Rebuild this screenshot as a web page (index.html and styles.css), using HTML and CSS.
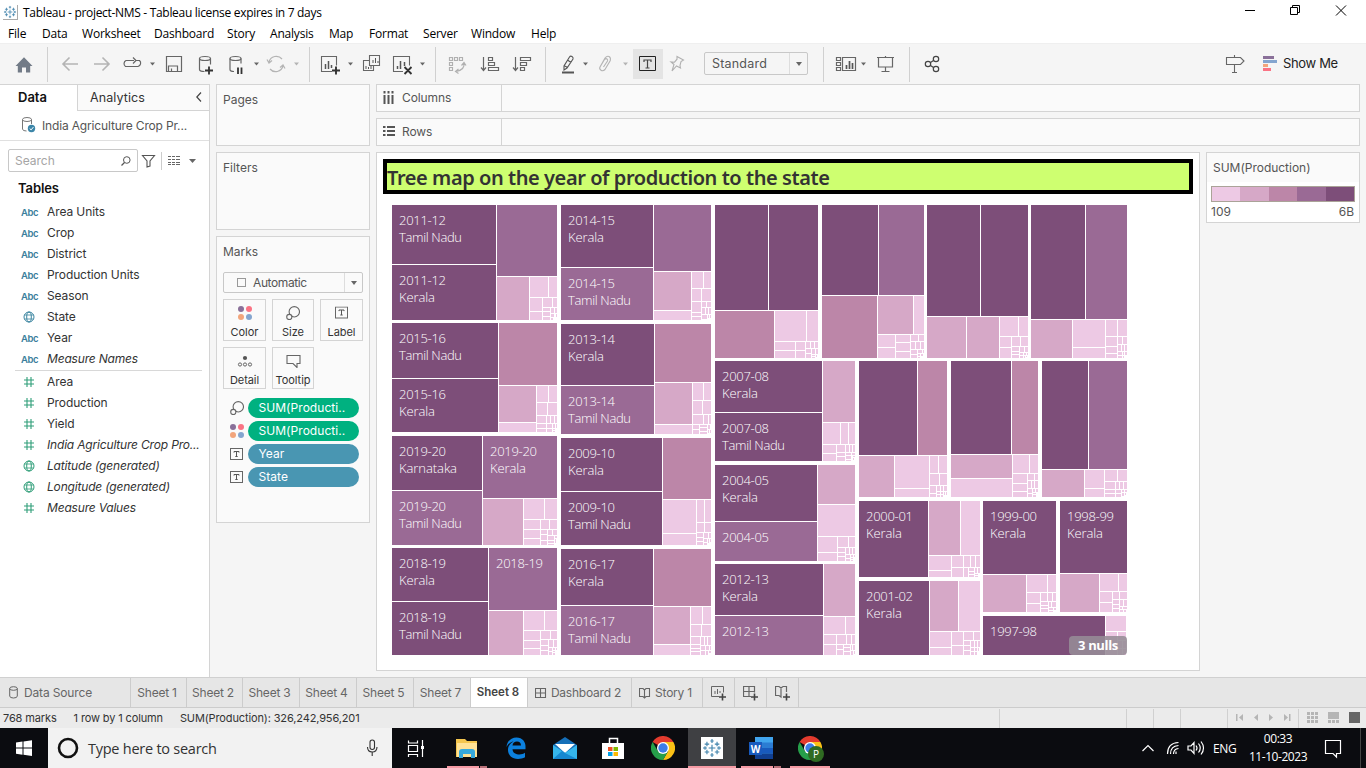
FILE: index.html
```html
<!DOCTYPE html>
<html lang="en">
<head>
<meta charset="utf-8">
<title>Tableau - project-NMS</title>
<link rel="stylesheet" href="styles.css">
</head>
<body>
<svg width="0" height="0" class="defs">
  <defs>
    <symbol id="hash" viewBox="0 0 12 12"><path d="M4 1v10M8 1v10M1 4h10M1 8h10" fill="none" stroke="#2f9e78" stroke-width="1.1"/></symbol>
    <symbol id="globe" viewBox="0 0 12 12"><g fill="none" stroke="currentColor"><circle cx="6" cy="6" r="5"/><ellipse cx="6" cy="6" rx="2.3" ry="5"/><path d="M1.5 4h9M1.5 8h9" stroke-width=".8"/></g></symbol>
    <symbol id="tbox" viewBox="0 0 14 13"><rect x=".5" y=".5" width="12" height="11" fill="none" stroke="#666"/><path d="M4 4.6V3.5h5v1.1M6.5 3.5v5M5.3 8.5h2.4" fill="none" stroke="#555"/></symbol>
    <symbol id="bubbles" viewBox="0 0 14 14"><circle cx="8.3" cy="5.8" r="5.2" fill="none" stroke="#666" stroke-width="1.1"/><circle cx="3.3" cy="11" r="2.6" fill="#fafafa" stroke="#666" stroke-width="1.1"/></symbol>
    <symbol id="dots" viewBox="0 0 14 14"><circle cx="3" cy="3" r="3" fill="#8a7099"/><circle cx="11" cy="3" r="3" fill="#fa7384"/><circle cx="3" cy="11" r="3" fill="#f2a57c"/><circle cx="11" cy="11" r="3" fill="#84a5cf"/></symbol>
    <symbol id="snow" viewBox="0 0 16 16"><path d="M8 5v6M5 8h6M8 0v3.5M6.5 1.8h3M8 12.5V16M6.5 14.2h3M0 8h3.5M1.8 6.5v3M12.5 8H16M14.2 6.5v3M3.5 2.5v4M1.5 4.5h4M12.5 2.5v4M10.5 4.5h4M3.5 9.5v4M1.5 11.5h4M12.5 9.5v4M10.5 11.5h4" fill="none" stroke="#3f82ab" stroke-width="1"/></symbol>
    <symbol id="chrome" viewBox="0 0 24 24"><path d="M12 12 1.6 6A12 12 0 0 1 22.4 6z" fill="#e33b2e"/><path d="M12 6h10.4A12 12 0 0 1 12 24l5.2-9z" fill="#fbc116"/><path d="M1.6 6 6.8 15 12 18h0.1L17.2 15 12 24A12 12 0 0 1 1.6 6z" fill="#269f4a"/><circle cx="12" cy="12" r="6" fill="#fff"/><circle cx="12" cy="12" r="4.7" fill="#3d7de8"/></symbol>
  </defs>
</svg>
<div class="window">
  <header class="titlebar">
    <svg class="appicon" width="15" height="15" viewBox="-1 -1 18 18"><use href="#snow" width="16" height="16"/></svg>
    <span class="title">Tableau - project-NMS - Tableau license expires in 7 days</span>
    <svg class="winbtns" width="126" height="24" viewBox="1240 0 126 24"><g fill="none" stroke="#000"><path d="M1245 10.500h10M1290.500 7.500h7v7h-7zM1292.500 7.500v-2h7v7h-2M1336 5.500l10 10M1346 5.500l-10 10"/></g></svg>
  </header>
  <nav class="menubar">
    <span class="m1">File</span><span class="m2">Data</span><span class="m3">Worksheet</span><span class="m4">Dashboard</span><span class="m5">Story</span><span class="m6">Analysis</span><span class="m7">Map</span><span class="m8">Format</span><span class="m9">Server</span><span class="m10">Window</span><span>Help</span>
  </nav>
  <div class="toolbar">
    <svg width="47" height="41" viewBox="0 43 47 41"><path d="M15.500 66 24 57.200l8.500 8.800h-2.300v6.500h-4.200v-5h-4v5h-4.200V66z" fill="#727b87"/></svg>
    <i class="sep"></i>
    <svg width="261" height="41" viewBox="48 43 261 41">
      <g fill="none" stroke="#b4b4b4" stroke-width="1.600"><path d="M78 64H63M69.500 57.500 63 64l6.500 6.500M94 64h15M102.500 57.500 109 64l-6.500 6.500"/><path d="M269 62a7.500 7.500 0 0 1 13-3M283 66a7.500 7.500 0 0 1-13 3M267 59.500l2 3.500 3-2.500M285 68.500l-2-3.500-3 2.500" stroke-width="1.200"/></g>
      <g fill="none" stroke="#666" stroke-width="1.200"><path d="M134 60.500h-8a3.500 3.500 0 0 0-.5 6h12.500a3.500 3.500 0 0 0 1.500-6h-4M133 57.500l3 3-3 3"/><path d="M166.500 56.500h15v15h-15zM168.500 71v-5h9v5M171.500 71v-2.500"/><ellipse cx="205" cy="58.500" rx="5.500" ry="2"/><path d="M199.500 58.500v11q0 2 5 2M210.500 58.500v6"/><ellipse cx="235.500" cy="58.500" rx="5.500" ry="2"/><path d="M230 58.500v11q0 2 4 2M241 58.500v5"/></g>
      <path d="M205 70.500h8M209 66.500v8M238 67.500v6.500M241.500 67.500v6.500" stroke="#333" stroke-width="1.800" fill="none"/>
      <path d="M150 62.500h5l-2.500 3zM254 62.500h5l-2.500 3z" fill="#666"/><path d="M294 62.500h5l-2.500 3z" fill="#b4b4b4"/>
    </svg>
    <i class="sep"></i>
    <svg width="125" height="41" viewBox="310 43 125 41">
      <g fill="none" stroke="#666" stroke-width="1.100"><path d="M332 71.500h-10.500v-15h15v9M369.500 60.500v-5h10v10h-10zM369.500 60.500h-6v10h10v-5M403 71.500h-9.500v-15h16v9"/></g>
      <path d="M325.500 69v-5M328.500 69v-8M331.500 68v-3M397.500 69v-3M400.500 69v-8M404.500 66v-4" stroke="#555" stroke-width="1.500"/><path d="M373 63v-3M375.500 63v-5M378 63v-2M366 69v-3M368.500 69v-2M371 69v-3" stroke="#555"/>
      <path d="M332 70.500h8M336 66.500v8M404.500 67l7 7M411.500 67l-7 7" stroke="#333" stroke-width="1.900"/>
      <path d="M348 62.500h5l-2.500 3zM420 62.500h5l-2.500 3z" fill="#666"/>
    </svg>
    <i class="sep"></i>
    <svg width="109" height="41" viewBox="436 43 109 41">
      <g fill="none" stroke="#b0b0b0" stroke-width="1.200"><path d="M449.500 57.500h3v3h-3zM454.500 57.500h3v3h-3zM459.500 57.500h3v3h-3zM449.500 62.500h3v3h-3zM449.500 67.500h3v3h-3zM464 63q1 7-8 8.500M461.500 65.500l2.500-3 2 3M458.500 69l-3 2.500 3 2"/></g>
      <g fill="none" stroke="#666" stroke-width="1.200"><path d="M483.500 57v13M481 67.500l2.500 3 2.500-3M488.500 57.500h4v3h-4zM488.500 62.500h6v3h-6zM488.500 67.500h10v3h-10zM515.500 57v13M513 67.500l2.500 3 2.500-3M520.500 57.500h10v3h-10zM520.500 62.500h6v3h-6zM520.500 67.500h4v3h-4z"/></g>
    </svg>
    <i class="sep"></i>
    <svg width="87" height="41" viewBox="546 43 87 41"><path d="M562 72.500h12" stroke="#555" stroke-width="2"/><path d="M564 70v-4l5.500-9q1-1.500 2.500-.5t1 2.500L567 68zM564 65.500l3.500 2M567.500 60l3.500 2.500" fill="none" stroke="#555" stroke-width="1.100"/><path d="M583 62.500h5l-2.500 3z" fill="#666"/><path d="M600 67l5-9q2-2.500 4-1.500t1.300 4L605 69.500q-2 2-4 .7t-1-3.200l4.500-7.500q1.500-1.500 2.500-.5t.5 2L603.500 67" fill="none" stroke="#b4b4b4" stroke-width="1.100"/><path d="M623 62.500h5l-2.500 3z" fill="#b4b4b4"/></svg>
    <span class="tbtn"><svg width="30" height="30" viewBox="633 49 30 30"><path d="M639.500 56.500h16v14h-16z" fill="none" stroke="#222"/><path d="M644 62v-2h7v2M647.500 60v8M645.500 68h4" fill="none" stroke="#444" stroke-width="1.200"/></svg></span>
    <svg width="41" height="41" viewBox="663 43 41 41"><path d="M677 56.500l6.500 3.500-2.500 1.500-1 4 .5 2.500-4-2-4.500 5 2-6.500-3-2.500 3.500.2 2.500-3z" fill="none" stroke="#b0b0b0" stroke-width="1.100"/></svg>
    <div class="combo big"><span>Standard</span><i></i></div>
    <svg width="15" height="41"></svg>
    <i class="sep"></i>
    <svg width="85" height="41" viewBox="824 43 85 41"><g fill="none" stroke="#666" stroke-width="1.200"><path d="M836.500 57.500h4v3h-4zM836.500 62.500h4v3h-4zM836.500 67.500h4v3h-4zM842.500 57.500h13v13h-13zM877 57.500h17M878.500 57.500v9.500h14v-9.500M885.500 56v2M885.500 67v4.500M881.500 71.500h8"/></g><path d="M846.500 69v-4M849.500 69v-8M852.500 69v-6" stroke="#555" stroke-width="1.700"/><path d="M861 62.500h5l-2.500 3z" fill="#666"/></svg>
    <i class="sep"></i>
    <svg width="40" height="41" viewBox="910 43 40 41"><g fill="none" stroke="#444" stroke-width="1.200"><circle cx="928" cy="64" r="2.700"/><circle cx="936" cy="59" r="2.700"/><circle cx="936" cy="69" r="2.700"/><path d="M930.500 62.500l3-2M930.500 65.500l3 2"/></g></svg>
    <svg class="push" width="58" height="41" viewBox="1220 43 58 41"><path d="M1226.500 57.500h14l3.500 3.500-3.500 3.500h-14zM1234.500 55v2M1234.500 65v7M1232 72.500h5" fill="none" stroke="#666" stroke-width="1.100"/><path d="M1263 56h11v3h-11z" fill="#8a7099"/><path d="M1263 60h14v3h-14z" fill="#84a5cf"/><path d="M1263 64h5v3h-5z" fill="#f2a57c"/><path d="M1263 68h8v3h-8z" fill="#fa7384"/></svg>
    <span class="showme">Show Me</span>
  </div>
  <main class="main">
    <aside class="datapane">
      <div class="ptabs"><b>Data</b><div><span>Analytics</span><svg width="6" height="10" viewBox="0 0 6 10"><path d="M5 .5.800 5 5 9.500" fill="none" stroke="#444" stroke-width="1.200"/></svg></div></div>
      <div class="source"><svg width="14" height="16" viewBox="0 0 14 16"><ellipse cx="5" cy="2.500" rx="4.500" ry="2" fill="none" stroke="#777"/><path d="M.5 2.500V12q0 2 4 2M9.500 2.500V7" fill="none" stroke="#777"/><circle cx="9.500" cy="11.500" r="3.700" fill="#3b85a8"/><path d="M7.700 11.500l1.400 1.400 2.300-2.800" fill="none" stroke="#fff"/></svg><span>India Agriculture Crop Pr...</span></div>
      <div class="searchrow">
        <div class="search"><span>Search</span><svg width="10" height="10" viewBox="0 0 10 10"><circle cx="5.800" cy="4" r="3.300" fill="none" stroke="#555"/><path d="M3.500 6.500.500 9.500" stroke="#555" stroke-width="1.200"/></svg></div>
        <svg width="61" height="22" viewBox="138 149 61 22"><path d="M142.500 154.500h12l-4.500 5.500v5l-3 1v-6z" fill="none" stroke="#555" stroke-width="1.100"/><path d="M161.500 151v18" stroke="#ccc"/><path d="M168 155.500h3M172 155.500h3M176 155.500h4M168 158.500h3M172 158.500h3M176 158.500h4M168 161.500h3M172 161.500h3M176 161.500h4M168 163.500h3M172 163.500h3M176 163.500h4" stroke="#666" stroke-width="1.200"/><path d="M189 158h7l-3.500 4z" fill="#666"/></svg>
      </div>
      <h2>Tables</h2>
      <ul class="fields">
        <li><b>Abc</b>Area Units</li><li><b>Abc</b>Crop</li><li><b>Abc</b>District</li><li><b>Abc</b>Production Units</li><li><b>Abc</b>Season</li>
        <li><svg class="blue" width="12" height="12"><use href="#globe"/></svg>State</li><li><b>Abc</b>Year</li><li class="it"><b>Abc</b>Measure Names</li>
      </ul>
      <hr>
      <ul class="fields">
        <li><svg width="12" height="12"><use href="#hash"/></svg>Area</li><li><svg width="12" height="12"><use href="#hash"/></svg>Production</li><li><svg width="12" height="12"><use href="#hash"/></svg>Yield</li>
        <li class="it"><svg width="12" height="12"><use href="#hash"/></svg><span class="long">India Agriculture Crop Pro...</span></li>
        <li class="it"><svg class="green" width="12" height="12"><use href="#globe"/></svg>Latitude (generated)</li><li class="it"><svg class="green" width="12" height="12"><use href="#globe"/></svg>Longitude (generated)</li>
        <li class="it"><svg width="12" height="12"><use href="#hash"/></svg>Measure Values</li>
      </ul>
    </aside>
    <section class="cards">
      <div class="card pages">Pages</div>
      <div class="card filters">Filters</div>
      <div class="card marks">Marks
        <div class="combo small"><svg width="10" height="10"><rect x=".5" y=".5" width="8" height="8" fill="none" stroke="#999"/></svg><span>Automatic</span><i></i></div>
        <div class="mgrid">
          <div><svg width="14" height="14"><use href="#dots"/></svg>Color</div>
          <div><svg width="14" height="14"><use href="#bubbles"/></svg>Size</div>
          <div><svg width="14" height="14" viewBox="0 0 14 13"><use href="#tbox" width="14" height="13"/></svg>Label</div>
          <div><svg width="16" height="14" viewBox="0 0 16 14"><circle cx="8" cy="4" r="2.100" fill="#555"/><g fill="none" stroke="#666"><circle cx="3" cy="10.500" r="1.600"/><circle cx="8" cy="10.500" r="1.600"/><circle cx="13" cy="10.500" r="1.600"/></g></svg>Detail</div>
          <div><svg width="15" height="14" viewBox="0 0 15 14"><path d="M1 1.500h13v8h-3v4l-4-4H1z" fill="none" stroke="#666" stroke-width="1.100"/></svg>Tooltip</div>
        </div>
        <div class="pills">
          <div><svg width="14" height="14"><use href="#bubbles"/></svg><span class="g">SUM(Producti..</span></div>
          <div><svg width="14" height="14"><use href="#dots"/></svg><span class="g">SUM(Producti..</span></div>
          <div><svg width="14" height="13"><use href="#tbox"/></svg><span>Year</span></div>
          <div><svg width="14" height="13"><use href="#tbox"/></svg><span>State</span></div>
        </div>
      </div>
    </section>
    <section class="work">
      <div class="shelf"><div><svg width="12" height="13" viewBox="0 0 12 13"><path d="M1.500 0v2.500M5.500 0v2.500M9.500 0v2.500M1.500 4v9M5.500 4v9M9.500 4v9" stroke="#555" stroke-width="2"/></svg>Columns</div></div>
      <div class="shelf"><div><svg width="12" height="11" viewBox="0 0 12 11"><path d="M0 1h2.500M0 5h2.500M0 9h2.500M4 1h8M4 5h8M4 9h8" stroke="#555" stroke-width="1.800"/></svg>Rows</div></div>
      <div class="bottom">
        <div class="view">
          <h1>Tree map on the year of production to the state</h1>
          <div class="plot"><svg id="treemap" width="737" height="452" viewBox="391 204 737 452" shape-rendering="crispEdges"></svg><span class="nulls">3 nulls</span></div>
        </div>
        <div class="legend"><p>SUM(Production)</p><div class="ramp"><i></i><i></i><i></i><i></i><i></i></div><div class="range"><span>109</span><span>6B</span></div></div>
      </div>
    </section>
  </main>
  <nav class="sheets">
    <span class="ds"><svg width="9" height="13" viewBox="0 0 9 13"><ellipse cx="4.500" cy="2.500" rx="3.800" ry="1.800" fill="none" stroke="#666"/><path d="M.700 2.500v7.500q0 2 3.800 2t3.800-2V2.500" fill="none" stroke="#666"/></svg>Data Source</span><span>Sheet 1</span><span>Sheet 2</span><span class="w57">Sheet 3</span><span class="w57">Sheet 4</span><span class="w57">Sheet 5</span><span class="w57">Sheet 7</span><span class="on">Sheet 8</span>
    <span class="db"><svg width="12" height="12"><path d="M.5 1.500h10v9H.500zM.5 6h10M5.500 1.500v9" fill="none" stroke="#666" stroke-width="1.100"/></svg>Dashboard 2</span>
    <span class="st"><svg width="12" height="12"><path d="M5.500 3 4 1.500H.500v8H4L5.500 11 7 9.500h3.500v-8H7zM5.500 3v8" fill="none" stroke="#666" stroke-width="1.100"/></svg>Story 1</span>
    <span class="add"><svg width="16" height="16"><path d="M8 11.500H.500v-10h12v6M4 9V6M6.500 9V4M9 8V6" fill="none" stroke="#666"/><path d="M8 12h7M11.500 8.500v7" stroke="#444" stroke-width="1.600"/></svg></span>
    <span class="add"><svg width="16" height="16"><path d="M8 11.500H.500v-10h11v6M.5 6.500h11M6 1.500v10" fill="none" stroke="#666" stroke-width="1.200"/><path d="M8 12h7M11.500 8.500v7" stroke="#444" stroke-width="1.600"/></svg></span>
    <span class="add"><svg width="16" height="16"><path d="M11.500 7V1.500H8L6 3 4 1.500H.500v9H4L6 12V3" fill="none" stroke="#666" stroke-width="1.200"/><path d="M8 12h7M11.500 8.500v7" stroke="#444" stroke-width="1.600"/></svg></span>
  </nav>
  <footer class="status"><span>768 marks</span><span>1 row by 1 column</span><span>SUM(Production): 326,242,956,201</span>
    <svg width="370" height="19" viewBox="996 709 370 19"><path d="M999.500 709v19M1126.500 709v19M1153.500 709v19M1180.500 709v19M1227.500 709v19M1298.500 709v19" stroke="#d0d0d0"/><g fill="#b5b5b5"><path d="M1236 714h1.500v7h-1.500zM1243 714v7l-4-3.500zM1258 714v7l-4-3.500zM1269 714v7l4-3.500zM1284 714v7l4-3.500zM1289 714h1.500v7h-1.500zM1307 712h3v3h-3zM1311 712h3v3h-3zM1315 712h3v3h-3zM1307 716h3v3h-3zM1311 716h3v3h-3zM1315 716h3v3h-3zM1307 720h3v3h-3zM1311 720h3v3h-3zM1315 720h3v3h-3zM1328 712h11v7h-11zM1328 720h3v3h-3zM1332 720h3v3h-3zM1336 720h3v3h-3z"/></g><path d="M1349 712h11v11h-11z" fill="#666"/></svg>
  </footer>
  <div class="taskbar">
    <svg width="48" height="40" viewBox="0 728 48 40"><path d="M16 742.500l6.500-1v6H16zM23.500 741.400l8.500-1.200v7.300h-8.500zM16 748.500h6.500v6.200l-6.500-1zM23.500 748.500H32v7.500l-8.500-1.200z" fill="#fff"/></svg>
    <div class="tsearch"><svg width="22" height="22"><circle cx="11" cy="11" r="9" fill="none" stroke="#111" stroke-width="2.600"/></svg><span>Type here to search</span><svg width="12" height="18"><rect x="4" y="1" width="4.500" height="9.500" rx="2.200" fill="none" stroke="#333" stroke-width="1.100"/><path d="M1.500 8q0 5 4.700 5T11 8M6.200 13v4" fill="none" stroke="#333" stroke-width="1.100"/></svg></div>
    <svg width="448" height="40" viewBox="392 728 448 40">
      <path d="M688 728h48v40h-48z" fill="#3f4043"/>
      <path d="M408.500 740.500v2.500h9v-2.500M408.500 745.500h9v6h-9zM408.500 757v-2.500h9v2.500M422.500 740v17" fill="none" stroke="#fff" stroke-width="1.200"/><path d="M421 746h3v3h-3z" fill="#fff"/>
      <path d="M456 739h9l2 2h10v16h-21z" fill="#f4c64f"/><path d="M457 743h20v14h-20z" fill="#ffe296"/><path d="M459 758v-6q0-3 3-3h10q3 0 3 3v6h-4v-4h-8v4z" fill="#36a9dc"/>
      <path d="M506.500 747c.5-6 5-9.500 10-9.500 6 0 9 4.500 9 9v2.800h-13c.3 4 3.500 5.200 7 5.200 2 0 4-.7 5.500-1.700v4.400c-2 1.200-4.500 1.700-7 1.700-6 0-10-3.500-10-8.800 0-4 2-7 5.500-8.700-2.500.3-5.200 2-7 5.600zm6-1.500h8.500c0-2.800-1.500-4-4-4s-4.200 1.600-4.500 4z" fill="#0c80dd"/>
      <path d="M553 745l12-8 12 8v14h-24z" fill="#156fb8"/><path d="M555 744h20l-10 9z" fill="#fff"/><path d="M553 745l12 8 12-8v14h-24z" fill="#35b6ec"/><path d="M553 759l9-8 3 2 12 6z" fill="#1688d1"/>
      <path d="M602 743h22v16h-22z" fill="#fff"/><path d="M609.500 743v-4.500h8v4.500" fill="none" stroke="#fff" stroke-width="1.500"/><path d="M608 747h4.500v4H608z" fill="#ee5125"/><path d="M613.500 747h4.500v4h-4.500z" fill="#7eb901"/><path d="M608 752h4.500v4H608z" fill="#02a2e9"/><path d="M613.500 752h4.500v4h-4.500z" fill="#fdb902"/>
      <use href="#chrome" x="651" y="736" width="24" height="24"/>
      <path d="M701 737h22v22h-22z" fill="#fff"/><use href="#snow" x="703" y="739" width="18" height="18"/>
      <path d="M755 737h18v22h-18z" fill="#41a5ee"/><path d="M755 742.500h18v5.500h-18z" fill="#2b7cd3"/><path d="M755 748h18v5.500h-18z" fill="#185abd"/><path d="M755 753.500h18v5.500h-18z" fill="#103f91"/><path d="M749 742h13v13h-13z" fill="#185abd"/><text x="755.500" y="752.500" class="word">W</text>
      <use href="#chrome" x="798" y="736" width="24" height="24"/><circle cx="816" cy="754" r="8" fill="#2f6b22"/><text x="816" y="757.500" class="pp">P</text>
      <path d="M447 766h32v2h-32zM688 766h48v2h-48zM741 766h32v2h-32zM790 766h40v2h-40z" fill="#f59aa4"/><path d="M480 766h7v2h-7zM774 766h7v2h-7z" fill="#b97179"/>
    </svg>
    <svg class="push" width="70" height="40" viewBox="1136 728 70 40"><g fill="none" stroke="#fff" stroke-width="1.200"><path d="M1141.500 751l5.500-5.500 5.500 5.500"/><path d="M1175 754v-2.500M1172.500 754q0-5 5-5.500M1169.500 754q0-8 8-8.500M1166.500 754q0-11 11-11.500M1187 746h3l3-3.500v11l-3-3.500h-3zM1195 745.500q2 2.500 0 5M1197.500 743.500q3.500 4.500 0 9M1200 741.500q5 6.500 0 13"/></g></svg>
    <span class="eng">ENG</span>
    <div class="clock"><span>00:33</span><span>11-10-2023</span></div>
    <svg width="52" height="40" viewBox="1314 728 52 40"><path d="M1325.500 740.500h15v13h-4v3.500l-3.500-3.500h-7.500z" fill="none" stroke="#fff" stroke-width="1.200"/><path d="M1360.500 728v40" stroke="#444"/></svg>
  </div>
</div>
<script src="treemap.js"></script>
</body>
</html>
```

FILE: treemap.js
```js
// Cells: shade (1 light .. 5 dark), left, top, right, bottom.
const shades = ['', '#edc9e4', '#d6a8c7', '#bc86a8', '#9a6a95', '#7d4e79'];
const large = `
5 392 205 496 264|5 392 265 496 320|4 497 205 557 276|2 497 277 529 320
5 392 323 498 378|5 392 379 498 432|3 499 323 557 385|2 499 386 536 422
5 392 436 482 490|4 392 491 482 545|4 483 436 557 498|2 483 499 523 545
5 392 548 488 601|5 392 602 488 655|4 489 548 557 610|2 489 611 523 655
5 561 205 653 267|4 561 268 653 320|4 654 205 711 271|2 654 272 691 310
5 561 324 654 385|4 561 386 654 434|3 655 324 711 382|2 655 383 692 424
5 561 438 662 491|5 561 492 662 545|3 663 438 711 499
5 561 549 653 605|4 561 606 653 655|3 654 549 711 606|2 654 607 690 644
5 715 205 768 310|5 769 205 818 310|3 715 311 774 358
5 822 205 878 295|4 879 205 924 295|3 822 296 877 358|2 878 296 913 334
5 927 205 980 316|5 981 205 1028 316|2 927 317 966 358|2 967 317 999 358
5 1031 205 1085 319|4 1086 205 1127 319|2 1031 320 1072 358
5 715 361 822 412|5 715 413 822 461|2 823 361 855 422
5 715 465 817 521|4 715 522 817 561|2 818 465 855 504
5 715 564 823 615|4 715 616 823 655|2 824 564 855 616
5 859 361 917 455|3 918 361 947 455|2 859 456 894 497
5 951 361 1011 454|3 1012 361 1038 454|2 951 455 1012 478
5 1042 361 1088 469|4 1089 361 1127 469|2 1042 470 1084 497
5 859 501 928 577|2 929 501 960 555|5 859 581 929 655|2 930 581 958 631
5 983 501 1056 574|2 983 575 1026 612|5 1060 501 1127 573|2 1060 574 1099 612
5 983 616 1105 655`;
const small = `
530 277 548 297|549 277 557 297|530 298 542 311|530 312 542 320|543 298 552 307|553 298 557 307|543 308 550 311|543 312 550 316|543 317 550 320|551 308 554 313|555 308 557 313|551 314 554 317|556 314 557 317|551 318 553 320
499 423 536 432|537 386 548 402|549 386 557 402|537 403 547 415|548 403 557 415|537 416 546 423|547 416 550 423|551 416 554 423|555 416 557 423|537 424 546 428|537 429 546 432|547 424 552 428|547 429 552 432|553 424 555 428|556 424 557 428|553 429 555 430|553 431 555 432
524 499 544 519|545 499 557 519|524 520 540 529|541 520 549 529|550 520 557 529|524 530 540 538|524 539 540 545|541 530 547 534|541 535 547 540|541 541 547 545|548 530 552 535|553 530 557 535|548 536 554 540|555 536 557 538|548 541 554 543|548 544 554 545|555 539 556 543
524 611 544 630|545 611 557 630|524 631 540 640|541 631 550 639|551 631 557 639|524 641 540 648|524 649 540 655|541 640 548 645|541 646 548 650|541 651 548 655|549 640 553 647|554 640 557 647|549 648 552 651|549 652 552 655|553 648 555 650|553 651 555 652|553 653 555 655|556 648 557 650
654 311 691 320|692 272 703 288|704 272 711 288|692 289 701 301|702 289 711 301|692 302 701 312|702 302 706 307|707 302 711 307|692 313 701 316|692 317 701 320|702 308 705 314|706 308 708 314|709 308 711 314|702 315 707 319|708 315 709 318|710 315 711 318
655 425 692 434|693 383 703 400|704 383 711 400|693 401 702 414|703 401 711 414|693 415 703 424|704 415 708 424|709 415 711 424|693 425 699 429|693 430 699 434|700 425 707 427|700 428 707 431|700 432 707 434|708 425 710 429|708 430 709 433|710 430 711 433
663 500 696 533|663 534 696 545|697 500 704 522|705 500 711 522|697 523 704 532|705 523 711 532|697 533 703 537|697 538 703 541|697 542 703 545|704 533 708 538|709 533 711 538|704 539 707 542|704 543 707 545|708 539 709 543|710 539 711 542
654 645 690 655|691 607 702 624|703 607 711 624|691 625 701 636|702 625 711 636|691 637 700 644|701 637 704 645|705 637 707 645|708 637 711 645|691 645 700 648|691 649 700 651|691 652 700 655|701 646 705 650|701 651 705 655|706 646 709 650|710 646 711 650|706 651 708 655|709 651 711 653
775 311 806 341|807 311 818 341|775 342 795 350|796 342 805 350|775 351 795 358|796 351 805 358|806 342 810 348|811 342 814 348|815 342 818 348|806 349 811 353|812 349 815 354|816 349 818 354|806 354 811 358|812 355 815 356|812 357 815 358|816 355 817 357
914 296 924 334|878 335 895 347|878 348 895 358|896 335 910 342|896 343 910 351|896 352 910 358|911 335 918 341|919 335 924 341|911 342 915 349|916 342 920 349|921 342 924 349|911 350 917 354|911 355 917 358|918 350 922 353|923 350 924 353|918 354 920 356|921 354 923 356|918 357 920 358
1000 317 1018 336|1019 317 1028 336|1000 337 1011 347|1000 348 1011 358|1012 337 1020 346|1021 337 1028 346|1012 347 1019 351|1012 352 1019 354|1012 355 1019 358|1020 347 1024 352|1025 347 1028 352|1020 353 1023 355|1024 353 1026 355|1027 353 1028 355|1020 356 1023 358|1024 356 1025 358|1026 356 1027 357
1073 320 1105 347|1073 348 1105 358|1106 320 1117 336|1118 320 1127 336|1106 337 1117 346|1106 347 1117 353|1106 354 1117 358|1118 337 1122 344|1123 337 1127 344|1118 345 1121 351|1122 345 1124 351|1125 345 1127 351|1118 352 1122 355|1123 352 1124 355|1125 352 1127 355|1118 356 1122 358|1123 356 1124 358
823 423 840 444|841 423 848 444|849 423 855 444|823 445 836 453|823 454 836 461|837 445 845 452|837 453 845 456|837 457 845 461|846 445 849 452|850 445 852 452|853 445 855 452|846 453 851 455|846 456 851 459|846 460 851 461|852 453 855 455|853 456 855 457|853 458 854 460
818 505 855 536|818 537 837 552|818 553 837 561|838 537 848 547|849 537 855 547|838 548 845 552|838 553 845 556|838 557 845 561|846 548 849 554|850 548 852 554|853 548 855 554|846 555 850 558|846 559 850 561|851 555 853 557|854 555 855 557|851 558 853 559|851 560 853 561
824 617 845 634|846 617 855 634|824 635 836 644|824 645 836 655|837 635 846 644|847 635 851 644|852 635 855 644|837 645 843 649|837 650 843 655|844 645 850 647|844 648 850 651|844 652 850 655|851 645 852 650|853 645 855 650|851 651 853 655|854 651 855 654
895 456 929 488|895 489 929 497|930 456 938 473|939 456 947 473|930 474 939 485|940 474 947 485|930 486 936 493|930 494 936 497|937 486 940 491|941 486 943 491|944 486 947 491|937 492 940 494|937 495 940 497|941 492 943 494|941 495 943 497|944 492 945 495|946 492 947 495
951 479 1012 497|1013 455 1029 473|1030 455 1038 473|1013 474 1027 483|1013 484 1027 491|1013 492 1027 497|1028 474 1034 480|1035 474 1038 480|1028 481 1031 488|1032 481 1034 488|1035 481 1038 488|1028 489 1032 493|1028 494 1032 497|1033 489 1035 492|1036 489 1038 492|1033 493 1036 494|1033 495 1036 497
1085 470 1104 488|1085 489 1104 497|1105 470 1117 481|1118 470 1127 481|1105 482 1115 489|1105 490 1115 493|1105 494 1115 497|1116 482 1119 489|1120 482 1123 489|1124 482 1127 489|1116 490 1121 493|1116 494 1121 497|1122 490 1124 492|1125 490 1127 492|1122 493 1124 496|1125 493 1126 495
961 501 980 555|929 556 951 570|929 571 951 577|952 556 963 567|952 568 963 577|964 556 970 567|971 556 975 567|976 556 980 567|964 568 968 577|969 568 974 571|969 572 974 574|969 575 974 577|975 568 977 573|978 568 980 573|975 574 978 575|975 576 978 577
959 581 980 631|930 632 951 647|930 648 951 655|952 632 963 645|952 646 963 655|964 632 973 640|974 632 980 640|964 641 970 645|964 646 970 650|964 651 970 655|971 641 974 647|975 641 977 647|978 641 980 647|971 648 974 651|971 652 974 655|975 648 977 651|978 648 979 651|975 652 977 655
1027 575 1047 592|1048 575 1056 592|1027 593 1040 603|1027 604 1040 612|1041 593 1047 601|1048 593 1052 601|1053 593 1056 601|1041 602 1048 605|1041 606 1048 608|1041 609 1048 612|1049 602 1051 607|1052 602 1056 607|1049 608 1053 610|1049 611 1053 612|1054 608 1056 610
1100 574 1118 591|1119 574 1127 591|1100 592 1112 602|1100 603 1112 612|1113 592 1119 599|1120 592 1127 599|1113 600 1119 604|1113 605 1119 608|1113 609 1119 612|1120 600 1123 606|1124 600 1127 606|1120 607 1122 609|1123 607 1127 609|1120 610 1123 612|1124 610 1126 612
1106 616 1126 631|1106 632 1117 644|1106 645 1117 655|1118 632 1126 640|1118 641 1122 648|1123 641 1126 648|1118 649 1122 655|1123 649 1126 655`;
const labels = `
399 225 2011-12|Tamil Nadu;399 285 2011-12|Kerala;399 343 2015-16|Tamil Nadu;399 399 2015-16|Kerala
399 456 2019-20|Karnataka;399 511 2019-20|Tamil Nadu;490 456 2019-20|Kerala;399 568 2018-19|Kerala;399 622 2018-19|Tamil Nadu;496 568 2018-19
568 225 2014-15|Kerala;568 288 2014-15|Tamil Nadu;568 344 2013-14|Kerala;568 406 2013-14|Tamil Nadu;568 458 2009-10|Kerala;568 512 2009-10|Tamil Nadu
568 569 2016-17|Kerala;568 626 2016-17|Tamil Nadu;722 381 2007-08|Kerala;722 433 2007-08|Tamil Nadu;722 485 2004-05|Kerala;722 542 2004-05
722 584 2012-13|Kerala;722 636 2012-13;866 521 2000-01|Kerala;866 601 2001-02|Kerala;990 521 1999-00|Kerala;1067 521 1998-99|Kerala;990 636 1997-98`;

const svg = document.getElementById('treemap');
const NS = 'http://www.w3.org/2000/svg';
function rect(shade, x0, y0, x1, y1) {
  const r = document.createElementNS(NS, 'rect');
  r.setAttribute('x', x0);
  r.setAttribute('y', y0);
  r.setAttribute('width', x1 - x0);
  r.setAttribute('height', y1 - y0);
  r.setAttribute('fill', shades[shade]);
  svg.appendChild(r);
}
large.trim().split(/[|\n]/).forEach(c => rect(...c.split(' ').map(Number)));
small.trim().split(/[|\n]/).forEach(c => rect(1, ...c.split(' ').map(Number)));
const widths = { 'Tamil Nadu': 63, Kerala: 36, Karnataka: 58 };
labels.trim().split(/[;\n]/).forEach(l => {
  const [, x, y, text] = l.match(/^(\d+) (\d+) (.*)$/);
  text.split('|').forEach((line, i) => {
    const t = document.createElementNS(NS, 'text');
    t.setAttribute('x', x);
    t.setAttribute('y', +y + i * 17);
    t.setAttribute('textLength', widths[line] || 47);
    t.textContent = line;
    svg.appendChild(t);
  });
});
```

FILE: styles.css
```css
* { box-sizing: border-box; }
body { margin: 0; font-family: Inter, "Liberation Sans", sans-serif; font-size: 12px; color: #333; overflow: hidden; }
ul, h1, h2, p { margin: 0; padding: 0; }
.defs { display: block; }
svg { display: block; flex: none; }
.window { width: 1366px; height: 768px; display: flex; flex-direction: column; background: #f5f5f5; }
.titlebar { height: 24px; background: #fff; display: flex; align-items: center; padding-left: 3px; font: 12px "Open Sans", sans-serif; color: #000; }
.appicon { border-right: 1px solid #aaa; border-bottom: 1px solid #aaa; margin-right: 5px; }
.title { letter-spacing: -0.31px; }
.winbtns { margin-left: auto; }
.menubar { height: 19px; background: #fff; display: flex; align-items: center; padding-left: 8px; font: 12px "Open Sans", sans-serif; color: #000; letter-spacing: -.2px; white-space: nowrap; }
.m1 { width: 34px; } .m2 { width: 40px; } .m3 { width: 72px; } .m4 { width: 73px; } .m5 { width: 43px; } .m6 { width: 59px; } .m7 { width: 40px; } .m8 { width: 54px; } .m9 { width: 48px; } .m10 { width: 60px; }
.toolbar { height: 41px; display: flex; align-items: center; box-shadow: inset 0 1px #efefef; }
.toolbar .sep { width: 1px; height: 35px; background: #d0d0d0; align-self: flex-end; margin-bottom: 2px; flex: none; }
.tbtn { background: #e4e4e4; margin-top: 1px; }
.push { margin-left: auto; }
.showme { font-size: 13px; width: 83px; margin: 0 0 1px 5px; color: #222; letter-spacing: -.35px; }
.combo { display: flex; align-items: center; border: 1px solid #c8c8c8; border-radius: 2px; color: #555; }
.combo i { margin-left: auto; align-self: stretch; width: 18px; border-left: 1px solid #ddd; display: grid; place-items: center; }
.combo i::after { content: ""; border: 3.500px solid transparent; border-top: 4px solid #666; border-bottom: 0; }
.big { width: 104px; height: 23px; padding-left: 7px; font-size: 12.500px; letter-spacing: .2px; }
.main { height: 593px; display: flex; }
.datapane { width: 210px; background: #fff; border-right: 1px solid #d4d4d4; border-top: 1px solid #d4d4d4; }
.ptabs { display: flex; height: 26px; font-size: 13px; }
.ptabs b { width: 77px; padding: 4px 0 0 18px; color: #111; font-weight: 600; }
.ptabs div { flex: 1; display: flex; justify-content: space-between; align-items: center; padding: 0 7px 1px 12px; background: #fafafa; border-left: 1px solid #d4d4d4; border-bottom: 1px solid #d4d4d4; font-size: 12.500px; letter-spacing: .08px; }
.source { height: 30px; border-bottom: 1px solid #e0e0e0; display: flex; align-items: center; gap: 6px; padding: 0 0 1px 22px; color: #555; letter-spacing: -.16px; white-space: nowrap; }
.searchrow { display: flex; align-items: center; padding: 8px 0 0 8px; }
.search { width: 130px; height: 23px; border: 1px solid #c8c8c8; border-radius: 2px; display: flex; align-items: center; justify-content: space-between; padding: 0 6px; color: #a5a5a5; }
h2 { font-size: 13px; font-weight: 600; color: #111; padding: 8px 0 6px 18px; line-height: 16px; letter-spacing: -.1px; }
.fields { list-style: none; }
.fields li { height: 21px; display: flex; align-items: center; padding: 0 0 2px 21px; white-space: nowrap; letter-spacing: -.1px; }
.fields li b { width: 26px; font-size: 9.500px; font-style: normal; color: #3b7e9c; font-weight: 600; letter-spacing: -.4px; padding-top: 2px; }
.fields li svg { margin: 0 12px 0 2px; }
.it { font-style: italic; }
.fields .it { letter-spacing: -.18px; }
.blue { color: #3b85a0; } .green { color: #2f9e78; }
hr { margin: 0 7px 0 15px; border: 0; border-top: 1px solid #d8d8d8; padding-bottom: 1px; }
.cards { width: 160px; padding-left: 6px; display: flex; flex-direction: column; gap: 6px; }
.card { width: 154px; background: #fafafa; border: 1px solid #d4d4d4; padding: 7px 6px; color: #555; line-height: 15px; }
.pages { height: 62px; } .filters { height: 78px; } .marks { height: 287px; }
.small { width: 140px; height: 21px; margin-top: 13px; padding-left: 13px; gap: 6px; letter-spacing: -.4px; }
.mgrid { display: grid; grid-template-columns: 43px 42px 43px; gap: 6px; margin-top: 6px; }
.mgrid div { height: 42px; border: 1px solid #d4d4d4; display: flex; flex-direction: column; align-items: center; padding-top: 6px; gap: 5px; font-size: 11px; color: #333; letter-spacing: -.05px; }
.pills { margin-top: 9px; display: flex; flex-direction: column; gap: 3px; padding-left: 7px; }
.pills div { display: flex; align-items: center; gap: 4px; height: 20px; }
.pills span { width: 111px; height: 20px; border-radius: 10px; background: #4996b2; color: #fff; padding: 2px 0 0 10.500px; letter-spacing: .05px; }
.pills .g { background: #00b180; }
.work { flex: 1; padding: 0 6px 6px 6px; display: flex; flex-direction: column; gap: 6px; }
.shelf { width: 984px; height: 28px; background: #fafafa; border: 1px solid #d4d4d4; display: flex; }
.shelf div { width: 125px; border-right: 1px solid #d4d4d4; display: flex; align-items: center; gap: 7px; padding: 0 0 1px 6px; color: #555; letter-spacing: -.1px; }
.bottom { display: flex; gap: 6px; }
.view { width: 824px; height: 519px; background: #fff; border: 1px solid #d4d4d4; padding: 6px; }
h1 { height: 35px; background: #ceff70; border: 4px solid #000; font: 600 20px/30px "Noto Sans", sans-serif; color: #333; white-space: nowrap; letter-spacing: -.43px; }
.plot { position: relative; width: 737px; margin: 10px 0 0 8px; }
#treemap text { font: 300 13px "Open Sans", sans-serif; fill: #fff; }
.nulls { position: absolute; right: 1px; bottom: 1px; width: 58px; height: 19px; border-radius: 4px; background: rgba(150,140,150,.88); color: #fff; font: bold 13px/19px "Open Sans", sans-serif; text-align: center; letter-spacing: -.35px; }
.legend { width: 154px; height: 71px; border: 1px solid #d4d4d4; background: #fff; color: #555; }
.legend p { height: 29px; background: #fafafa; padding: 7px 6px; letter-spacing: -.02px; }
.ramp { display: flex; margin: 4px 4px 0; border: 1px solid #aaa398; height: 16px; }
.ramp i { flex: 1; background: #edc9e4; }
.ramp i:nth-child(2) { background: #d6a8c7; } .ramp i:nth-child(3) { background: #bc86a8; } .ramp i:nth-child(4) { background: #9a6a95; } .ramp i:nth-child(5) { background: #7d4e79; }
.range { display: flex; justify-content: space-between; padding: 2px 5px 0 4px; }
.sheets { height: 31px; border-top: 1px solid #d0d0d0; border-bottom: 1px solid #ccc; background: #e6e6e6; display: flex; color: #666; }
.sheets span { width: 56px; border-right: 1px solid #ccc; display: flex; align-items: center; justify-content: center; white-space: nowrap; letter-spacing: -.22px; gap: 4px; padding-right: 3px; }
.sheets .w57 { width: 57px; }
.sheets .ds { width: 131px; justify-content: flex-start; padding-left: 9px; gap: 6px; letter-spacing: -.15px; }
.sheets .on { width: 57px; background: #fff; color: #444; font-weight: 600; letter-spacing: 0; font-size: 11.500px; padding: 0 2px 1px 0; }
.sheets .db { width: 104px; } .sheets .st { width: 71px; } .sheets .add { width: 32px; padding-right: 0; }
.status { height: 20px; background: #ebebeb; display: flex; align-items: center; padding-left: 3px; font-size: 11px; gap: 17px; letter-spacing: -.13px; white-space: nowrap; }
.status svg { margin-left: auto; }
.taskbar { height: 40px; background: #0b0c10; display: flex; align-items: center; color: #fff; }
.tsearch { width: 344px; height: 40px; background: #f2f2f2; display: flex; align-items: center; padding: 0 14px 0 9px; color: #333; font: 14.500px "Open Sans", sans-serif; letter-spacing: -.25px; }
.tsearch span { margin: 0 auto 0 9px; }
.eng { width: 37px; padding-left: 6px; font: 12px "Open Sans", sans-serif; letter-spacing: -.4px; }
.clock { width: 70px; display: flex; flex-direction: column; align-items: center; font: 12px/18px "Open Sans", sans-serif; letter-spacing: -.45px; padding-right: 2px; }
.word { font: bold 10px "Open Sans", sans-serif; fill: #fff; text-anchor: middle; }
.pp { font: 10px "Open Sans", sans-serif; fill: #fff; text-anchor: middle; }
```
